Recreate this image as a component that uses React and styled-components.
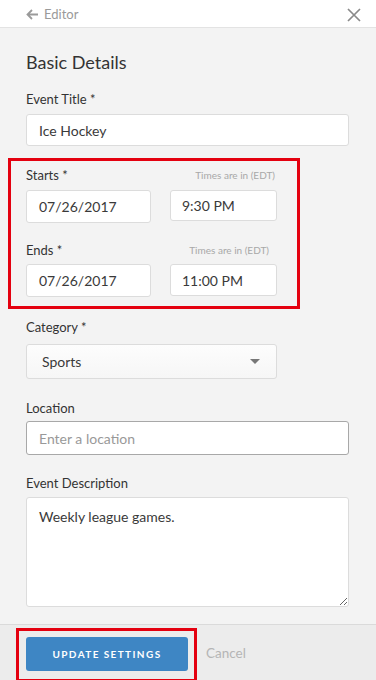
import React from "react";
import styled, { createGlobalStyle } from "styled-components";

const Global = createGlobalStyle`
  html, body { margin: 0; padding: 0; background: #f3f3f3; }
  body { font-family: Lato, "Open Sans", sans-serif; color: #333; }
  * { box-sizing: border-box; }
`;

const Page = styled.div`
  width: 376px;
  height: 680px;
  display: flex;
  flex-direction: column;
  overflow: hidden;
  background: #f3f3f3;
`;

const Header = styled.header`
  height: 28px;
  flex: none;
  background: #fff;
  border-bottom: 1px solid #e3e3e3;
  display: flex;
  align-items: center;
  justify-content: space-between;
  padding: 2px 15px 0 26px;
`;

const Back = styled.div`
  display: flex;
  align-items: center;
  gap: 6px;
  color: #9a9a9a;
  font-size: 13px;
  line-height: 1;
`;

const CloseBtn = styled.div`
  width: 14px;
  height: 14px;
  display: flex;
  color: #8a8a8a;
`;

const Main = styled.main`
  flex: 1;
  padding: 23px 27px 0 26px;
  display: flex;
  flex-direction: column;
`;

const Title = styled.h1`
  margin: 0;
  font-size: 18px;
  line-height: 22px;
  font-weight: 400;
  color: #333;
`;

const Label = styled.label`
  display: block;
  font-size: 13px;
  line-height: 16px;
  color: #333;
  margin-top: ${(p) => p.$mt ?? 0}px;
`;

const Field = styled.div`
  margin-top: ${(p) => p.$mt ?? 7}px;
  width: ${(p) => p.$w || "100%"};
  height: ${(p) => p.$h || 32}px;
  background: #fff;
  border: 1px solid ${(p) => (p.$dark ? "#a8a8a8" : "#dcdcdc")};
  border-radius: 3px;
  display: flex;
  align-items: center;
  padding: 0 ${(p) => p.$px || 12}px;
  font-size: 14px;
  color: ${(p) => (p.$placeholder ? "#999" : "#3a3a3a")};
  flex: none;
`;

const Select = styled(Field)`
  justify-content: space-between;
  background: linear-gradient(#fdfdfd, #f6f6f6);
  padding: 0 16px 0 15px;
`;

const Caret = styled.span`
  width: 0;
  height: 0;
  border-left: 5px solid transparent;
  border-right: 5px solid transparent;
  border-top: 5px solid #777;
`;

const Highlight = styled.div`
  border: 3px solid #e4000f;
  margin: ${(p) => p.$margin};
  padding: ${(p) => p.$padding};
`;

const LabelRow = styled.div`
  display: flex;
  align-items: center;
  justify-content: space-between;
  height: 16px;
  margin-top: ${(p) => p.$mt ?? 0}px;
  padding-right: ${(p) => p.$pr ?? 2}px;
`;

const Zone = styled.span`
  font-size: 10px;
  line-height: 12px;
  color: #a8a8a8;
`;

const DateRow = styled.div`
  display: flex;
  gap: 19px;
  align-items: flex-start;
  margin-top: ${(p) => p.$mt ?? 7}px;
`;

const Textarea = styled.textarea`
  display: block;
  margin-top: 6px;
  width: 100%;
  height: 110px;
  border: 1px solid #dcdcdc;
  border-radius: 3px;
  background: #fff;
  padding: 10px 12px;
  font-family: Lato, "Open Sans", sans-serif;
  font-size: 14px;
  color: #3a3a3a;
  outline: none;
`;

const Footer = styled.footer`
  flex: none;
  height: 56px;
  border-top: 1px solid #dadada;
  background: #ececec;
  padding: 3px 0 0 16px;
  display: flex;
  align-items: flex-start;
  gap: 9px;
`;

const Button = styled.button`
  width: 162px;
  height: 34px;
  border: none;
  border-radius: 3px;
  background: #3e86c4;
  color: #fff;
  font-family: Lato, "Open Sans", sans-serif;
  font-weight: 700;
  font-size: 10px;
  letter-spacing: 1.4px;
  display: block;
`;

const Cancel = styled.span`
  font-size: 13.5px;
  color: #b5b5b5;
  margin-top: 17px;
  line-height: 16px;
`;

export default function App() {
  return (
    <Page>
      <Global />
      <Header>
        <Back>
          <svg width="12" height="11" viewBox="0 0 12 11" fill="none" stroke="currentColor" strokeWidth="1.8">
            <path d="M12 5.5H1.5M6 1L1.5 5.5L6 10" />
          </svg>
          Editor
        </Back>
        <CloseBtn>
          <svg width="14" height="14" viewBox="0 0 14 14" stroke="currentColor" strokeWidth="1.7">
            <path d="M1 1L13 13M13 1L1 13" />
          </svg>
        </CloseBtn>
      </Header>
      <Main>
        <Title>Basic Details</Title>
        <Label $mt={18}>Event Title *</Label>
        <Field $h={32}>Ice Hockey</Field>

        <Highlight $margin="12px 0 0 -18px" $padding="6px 20px 9px 15px" style={{ width: 292 }}>
          <LabelRow>
            <Label>Starts *</Label>
            <Zone>Times are in (EDT)</Zone>
          </LabelRow>
          <DateRow>
            <Field $mt={0} $w="125px" $h={33}>07/26/2017</Field>
            <Field $mt={0} $w="107px" $h={31} $px={11}>9:30 PM</Field>
          </DateRow>
          <LabelRow $mt={19} $pr={8}>
            <Label>Ends *</Label>
            <Zone>Times are in (EDT)</Zone>
          </LabelRow>
          <DateRow $mt={6}>
            <Field $mt={0} $w="125px" $h={33}>07/26/2017</Field>
            <Field $mt={0} $w="107px" $h={32} $px={11}>11:00 PM</Field>
          </DateRow>
        </Highlight>

        <Label $mt={10}>Category *</Label>
        <Select $mt={9} $w="251px" $h={35}>
          Sports
          <Caret />
        </Select>

        <Label $mt={21}>Location</Label>
        <Field $mt={5} $h={34} $dark $placeholder>Enter a location</Field>

        <Label $mt={20}>Event Description</Label>
        <Textarea defaultValue="Weekly league games." />
      </Main>
      <Footer>
        <Highlight $margin="0" $padding="6px 6px 8px 7px">
          <Button>UPDATE SETTINGS</Button>
        </Highlight>
        <Cancel>Cancel</Cancel>
      </Footer>
    </Page>
  );
}
